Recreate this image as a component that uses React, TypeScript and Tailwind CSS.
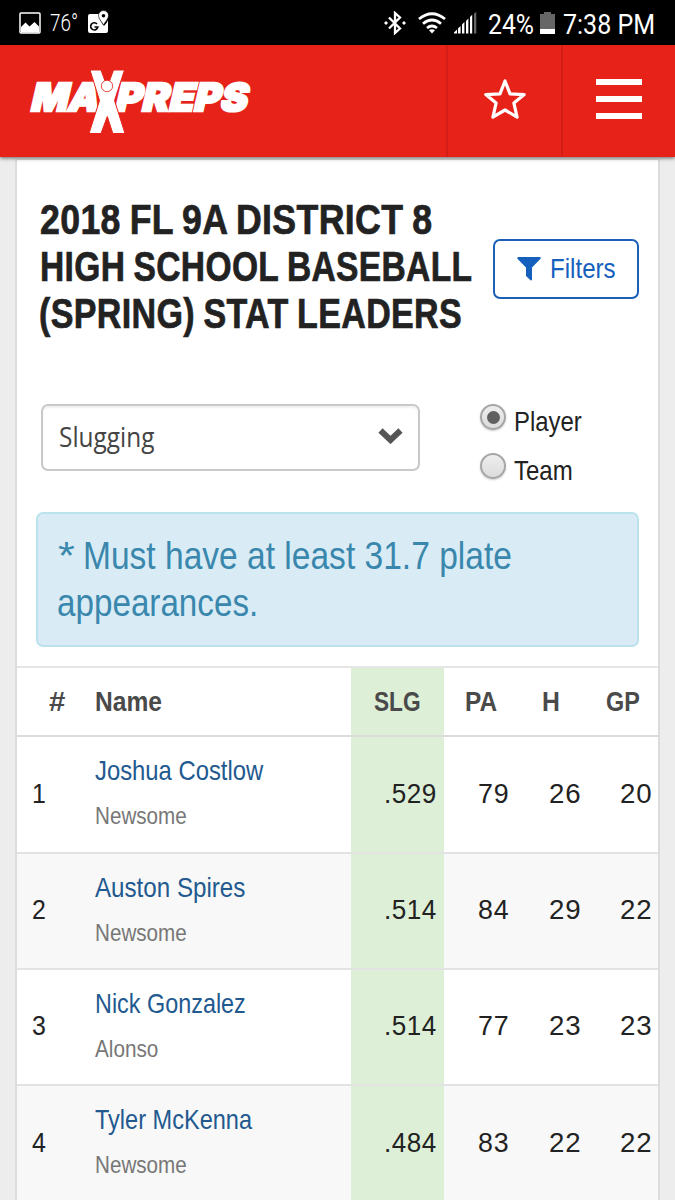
import { useLayoutEffect, useRef, useState } from "react";
import type { ReactNode } from "react";

/** Condensed run of text: squeezes the glyphs horizontally to the given width. */
function Fit({ w, className = "", children }: { w: number; className?: string; children: ReactNode }) {
  const ref = useRef<HTMLSpanElement>(null);
  const [scale, setScale] = useState(1);
  useLayoutEffect(() => {
    const el = ref.current;
    if (!el) return;
    const measure = () => {
      if (el.offsetWidth) setScale(w / el.offsetWidth);
    };
    measure();
    const observer = new ResizeObserver(measure);
    observer.observe(el);
    return () => observer.disconnect();
  }, [w]);
  return (
    <span className={`flex shrink-0 ${className}`} style={{ width: w }}>
      <span ref={ref} className="block shrink-0 origin-left whitespace-nowrap" style={{ transform: `scaleX(${scale})` }}>
        {children}
      </span>
    </span>
  );
}

function StatusBar() {
  return (
    <div className="flex h-[45px] items-center bg-black font-['Roboto',sans-serif] text-[28px] leading-[45px] text-white">
      <svg className="ml-[19px] h-[22px] w-[22px]" viewBox="0 0 22 22">
        <rect x="1" y="1" width="20" height="20" rx="1" fill="none" stroke="#fff" strokeWidth="1.5" />
        <path d="M2 15l4.500-4.500 4 4 5-4.500 4.500 4.500v6H2z" fill="#fff" />
      </svg>
      <Fit w={28} className="ml-[9px] h-[45px] text-[23px] font-light">
        <span className="relative top-[1px]">76°</span>
      </Fit>
      <svg className="mb-[2px] ml-[9px] h-[24px] w-[24px]" viewBox="0 0 24 24">
        <path d="M3 4h9c0 5 2 8 5 12 2-2 4-5 4-6v11a2 2 0 0 1-2 2H3a2 2 0 0 1-2-2V6a2 2 0 0 1 2-2z" fill="#fff" />
        <path d="M16.500.5a5 5 0 0 1 5 5c0 3.500-3.200 6-5 9.500-1.800-3.500-5-6-5-9.500a5 5 0 0 1 5-5z" fill="#fff" stroke="#000" strokeWidth=".6" />
        <circle cx="16.500" cy="5.700" r="1.800" fill="#000" />
        <path d="M10 14a3.600 3.600 0 1 0 .8 3H7.500" fill="none" stroke="#000" strokeWidth="1.600" />
      </svg>
      <div className="ml-auto flex items-center">
        <svg className="h-[24px] w-[22px]" viewBox="0 0 22 24">
          <path d="M5 6.500l11 11-5 4.500V2l5 4.500-11 11" fill="none" stroke="#fff" strokeWidth="2.300" />
          <path d="M0 12l2-2 2 2-2 2zM18 12l2-2 2 2-2 2z" fill="#fff" />
        </svg>
        <svg className="ml-[12px] h-[22px] w-[28px]" viewBox="0 0 28 22">
          <g fill="none" stroke="#fff" strokeWidth="2.800">
            <path d="M1 7Q14-3.500 27 7" />
            <path d="M5 11.800Q14 4.200 23 11.800" />
            <path d="M9 16Q14 12 19 16" />
          </g>
          <path d="M11 18.200q3-2 6 0L14 21.500z" fill="#fff" />
        </svg>
        <svg className="ml-[8px] h-[22px] w-[23px]" viewBox="0 0 23 22">
          <path d="M0 21.500v-1l3-3v4zM4 21.500v-5l2.600-2.500v7.500zM8 21.500v-9l2.400-2.400v11.400zM12 21.500V9l2.400-2.400v14.900zM16 21.500V5l2.200-2.200v18.700z" fill="#fff" />
          <path d="M20 21.500v-20L22.300 0v21.500z" fill="#666" />
        </svg>
        <Fit w={46} className="ml-[11px] h-[45px]"><span className="relative top-[2px]">24%</span></Fit>
        <svg className="ml-[6px] h-[22px] w-[15px]" viewBox="0 0 15 22">
          <path d="M0 2h4V0h7v2h4v15H0z" fill="#666" />
          <path d="M0 17h15v5H0z" fill="#fff" />
        </svg>
        <Fit w={92} className="mr-[20px] ml-[8px] h-[45px]"><span className="relative top-[2px]">7:38 PM</span></Fit>
      </div>
    </div>
  );
}

function Logo() {
  return (
    <svg className="ml-[26px] h-[70px] w-[228px]" viewBox="26 65 228 70">
      <g fill="#fff" stroke="#fff" strokeWidth="2.400" fontFamily="Inter, sans-serif" fontWeight="900" fontSize="38.500">
        <text transform="translate(29.500 110) skewX(-13)" textLength="68" lengthAdjust="spacingAndGlyphs">MA</text>
        <text transform="translate(114 110) skewX(-13)" textLength="132" lengthAdjust="spacingAndGlyphs">PREPS</text>
      </g>
      <path
        d="M90 69H101L105 80H109.500L113.500 69H124.500L114.500 99.500 125 132.500H112.800L107.300 115.500 101 132.500H89L99.500 99.500Z"
        fill="#fff" stroke="#e62219" strokeWidth="1"
      />
      <circle cx="107" cy="85" r="5.700" fill="#fff" stroke="#e62219" strokeWidth=".8" />
    </svg>
  );
}

function Header() {
  return (
    <header className="relative z-10 flex h-[112px] items-center bg-[#e62219] shadow-[0_1px_4px_rgba(0,0,0,0.6)]">
      <Logo />
      <button className="ml-auto flex h-full w-[115px] items-center justify-center border-l-2 border-[#d31e17]">
        <svg className="mt-[-4px] h-[42px] w-[44px]" viewBox="0 0 44 42">
          <path d="M22 3l5 12.800 14.200.8-10.300 8.500 3.200 14L22 32l-12.100 7.100 3.200-14L2.800 16.600l14.200-.8z" fill="none" stroke="#fff" strokeWidth="3.200" strokeLinejoin="round" />
        </svg>
      </button>
      <button className="flex h-full w-[114px] flex-col items-center justify-center gap-[11px] border-l-2 border-[#d31e17] pb-[4px]">
        <span className="h-[6px] w-[46px] bg-white" />
        <span className="h-[6px] w-[46px] bg-white" />
        <span className="h-[6px] w-[46px] bg-white" />
      </button>
    </header>
  );
}

function Radio({ label, w, checked }: { label: string; w: number; checked?: boolean }) {
  return (
    <label className="flex h-[48.500px] items-start">
      <span className="flex h-[26px] w-[26px] items-center justify-center rounded-full border-2 border-[#a6a6a6] bg-linear-to-b from-[#eeeeee] to-[#dcdcdc] shadow-[0_1px_2px_rgba(0,0,0,0.2)]">
        {checked && <span className="h-[13px] w-[13px] rounded-full bg-[#606060]" />}
      </span>
      <Fit w={w} className="mt-px ml-[8px] text-[28.500px] leading-[32px] text-[#222]">{label}</Fit>
    </label>
  );
}

const players = [
  { rank: 1, name: "Joshua Costlow", nameW: 168, school: "Newsome", schoolW: 92, slg: ".529", pa: 79, h: 26, gp: 20 },
  { rank: 2, name: "Auston Spires", nameW: 150, school: "Newsome", schoolW: 92, slg: ".514", pa: 84, h: 29, gp: 22 },
  { rank: 3, name: "Nick Gonzalez", nameW: 151, school: "Alonso", schoolW: 63, slg: ".514", pa: 77, h: 23, gp: 23 },
  { rank: 4, name: "Tyler McKenna", nameW: 157, school: "Newsome", schoolW: 92, slg: ".484", pa: 83, h: 22, gp: 22 },
];

function Leaders() {
  return (
    <div className="mt-[19px] border-t-2 border-[#e6e6e6] text-[28.500px] leading-[32px] text-[#222]">
      <div className="grid h-[69px] grid-cols-[78px_256px_93px_71px_72px_71px] border-b-2 border-[#dcdcdc] pt-px text-[27.500px] font-bold text-[#4a4a4a]">
        <div className="flex items-center justify-end pr-[30px]"><Fit w={16}>#</Fit></div>
        <div className="flex items-center"><Fit w={67}>Name</Fit></div>
        <div className="-mt-px flex items-center justify-end bg-[#ddefd7] pt-px pr-[23px]"><Fit w={47}>SLG</Fit></div>
        <div className="flex items-center justify-end pr-[18px]"><Fit w={32}>PA</Fit></div>
        <div className="flex items-center justify-end pr-[27px]"><Fit w={18}>H</Fit></div>
        <div className="flex items-center justify-end pr-[18px]"><Fit w={34}>GP</Fit></div>
      </div>
      {players.map((p) => (
        <div key={p.rank} className="grid h-[116.200px] grid-cols-[78px_256px_93px_71px_72px_71px] border-b-2 border-[#e3e3e3] odd:bg-[#f8f8f8] even:bg-white">
          <div className="flex items-center pb-[3px] pl-[15px]"><Fit w={14}>{p.rank}</Fit></div>
          <div className="flex flex-col pt-[17px]">
            <Fit w={p.nameW} className="text-[#22598f]">{p.name}</Fit>
            <Fit w={p.schoolW} className="mt-[16px] text-[24px] leading-[28px] text-[#777]">{p.school}</Fit>
          </div>
          <div className="flex items-center justify-end bg-[#ddefd7] pr-[7px] pb-[3px]"><Fit w={53} className="tracking-[0.02em]">{p.slg}</Fit></div>
          <div className="flex items-center justify-end pr-[6px] pb-[3px]"><Fit w={31} className="tracking-[0.03em]">{p.pa}</Fit></div>
          <div className="flex items-center justify-end pr-[6px] pb-[3px]"><Fit w={32} className="tracking-[0.03em]">{p.h}</Fit></div>
          <div className="flex items-center justify-end pr-[6px] pb-[3px]"><Fit w={32} className="tracking-[0.03em]">{p.gp}</Fit></div>
        </div>
      ))}
    </div>
  );
}

export default function App() {
  return (
    <div className="h-[1200px] w-[675px] overflow-hidden bg-[#ededed] font-['Liberation_Sans',sans-serif]">
      <StatusBar />
      <Header />
      <main className="mx-[15px] mt-[2px] h-[1100px] border-x-2 border-t border-[#dcdcdc] bg-white">
        <div className="flex pt-[37px] pl-[22px]">
          <h1 className="w-[454px] text-[42.500px] leading-[46.800px] font-bold tracking-[0.01em] text-[#222] [-webkit-text-stroke:0.7px_#222] [word-spacing:-0.04em]">
            <Fit w={392} className="pl-px">2018 FL 9A DISTRICT 8</Fit>
            <Fit w={432} className="pl-px">HIGH SCHOOL BASEBALL</Fit>
            <Fit w={423}>(SPRING) STAT LEADERS</Fit>
          </h1>
          <button className="mt-[42px] flex h-[60px] w-[146px] items-center rounded-[7px] border-2 border-[#1c5fb9] pl-[22px] text-[28.500px] leading-[32px] text-[#1560bd]">
            <svg className="h-[24px] w-[24px]" viewBox="0 0 24 24">
              <path d="M1 0h22q1 0 .6 1.800L15 10.500v12.300q-.5 1.200-1.500.4L9 19v-8.500L.4 1.800Q0 0 1 0z" fill="#1560bd" />
            </svg>
            <Fit w={66} className="mb-[2px] ml-[9px]">Filters</Fit>
          </button>
        </div>
        <div className="mt-[67px] flex pl-[24px]">
          <div className="flex h-[67px] w-[379px] items-center rounded-[7px] border-2 border-[#c9c9c9] pr-[15px] pl-[16px] text-[28.500px] text-[#444] shadow-[inset_0_2px_2px_rgba(0,0,0,0.06)]">
            <Fit w={95} className="pb-[4px] font-['Open_Sans',sans-serif] text-[28px] leading-[38px]">Slugging</Fit>
            <svg className="mb-[3px] ml-auto h-[16px] w-[25px]" viewBox="0 0 25 16">
              <path d="M2.500 2.500l10 9.500 10-9.500" fill="none" stroke="#555" strokeWidth="6" />
            </svg>
          </div>
          <div className="ml-[60px] flex flex-col">
            <Radio label="Player" w={68} checked />
            <Radio label="Team" w={59} />
          </div>
        </div>
        <div className="mt-[11px] ml-[19px] h-[135px] w-[603px] rounded-[7px] border-2 border-[#bce3ec] bg-[#d9ecf5] pt-[19px] pl-[19px] text-[38px] leading-[46.800px] text-[#3a87ad]">
          <div className="flex">
            <Fit w={17} className="ml-[1px]">*</Fit>
            <Fit w={429} className="ml-[8px]">Must have at least 31.7 plate</Fit>
          </div>
          <Fit w={201}>appearances.</Fit>
        </div>
        <Leaders />
      </main>
    </div>
  );
}
